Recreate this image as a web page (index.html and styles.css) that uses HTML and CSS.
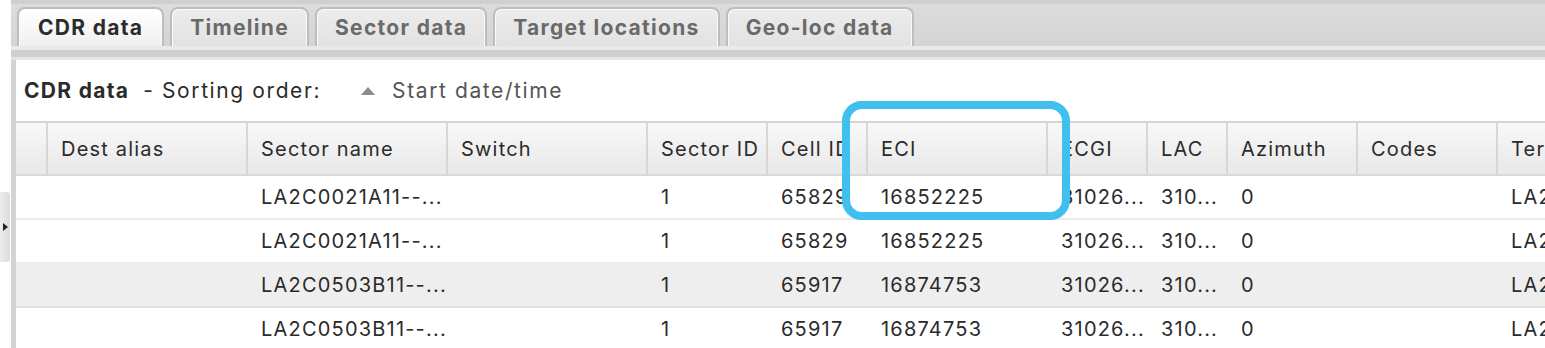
FILE: index.html
```html
<!DOCTYPE html>
<html lang="en">
	<head>
		<meta charset="utf-8">
		<title>CDR data</title>
		<link rel="stylesheet" href="styles.css">
	</head>
	<body>
		<div id="page">
			<div class="gutter">
				<div class="expander"><span class="expander-arrow"></span></div>
			</div>
			<div class="panel">
				<div class="tabbar">
					<div class="tab active">CDR data</div>
					<div class="tab">Timeline</div>
					<div class="tab">Sector data</div>
					<div class="tab">Target locations</div>
					<div class="tab">Geo-loc data</div>
				</div>
				<div class="tabstrip"></div>
				<div class="content">
					<div class="titlebar">
						<b>CDR data</b>
						<span class="sorting">- Sorting order:</span>
						<span class="sortkey"><span class="sort-arrow"></span>Start date/time</span>
					</div>
					<table class="grid">
						<colgroup>
							<col style="width:32px">
							<col style="width:200px">
							<col style="width:200px">
							<col style="width:200px">
							<col style="width:120px">
							<col style="width:100px">
							<col style="width:180px">
							<col style="width:100px">
							<col style="width:80px">
							<col style="width:130px">
							<col style="width:140px">
							<col style="width:200px">
						</colgroup>
						<thead>
							<tr>
								<th></th>
								<th>Dest alias</th>
								<th>Sector name</th>
								<th>Switch</th>
								<th>Sector ID</th>
								<th>Cell ID</th>
								<th>ECI</th>
								<th>ECGI</th>
								<th>LAC</th>
								<th>Azimuth</th>
								<th>Codes</th>
								<th>Terminal sector</th>
							</tr>
						</thead>
						<tbody>
							<tr>
								<td></td><td></td><td>LA2C0021A11--...</td><td></td><td>1</td><td>65829</td>
								<td>16852225</td><td>31026...</td><td>310...</td><td>0</td><td></td><td>LA2C0021A11</td>
							</tr>
							<tr>
								<td></td><td></td><td>LA2C0021A11--...</td><td></td><td>1</td><td>65829</td>
								<td>16852225</td><td>31026...</td><td>310...</td><td>0</td><td></td><td>LA2C0021A11</td>
							</tr>
							<tr class="alt">
								<td></td><td></td><td>LA2C0503B11--...</td><td></td><td>1</td><td>65917</td>
								<td>16874753</td><td>31026...</td><td>310...</td><td>0</td><td></td><td>LA2C0503B11</td>
							</tr>
							<tr>
								<td></td><td></td><td>LA2C0503B11--...</td><td></td><td>1</td><td>65917</td>
								<td>16874753</td><td>31026...</td><td>310...</td><td>0</td><td></td><td>LA2C0503B11</td>
							</tr>
						</tbody>
					</table>
				</div>
			</div>
			<!-- highlight drawn over the ECI column -->
			<div class="callout"></div>
		</div>
	</body>
</html>
```

FILE: styles.css
```css
body { margin: 0; background: white; color: #2b2b2b; font-family: Inter, "Open Sans", sans-serif; }
#page {
	position: relative;
	display: flex;
	height: 348px;
	overflow: hidden;
}
.gutter {
	position: relative;
	width: 11px;
	flex: none;
}
.expander {
	position: absolute;
	left: 0;
	top: 192px;
	width: 10px;
	height: 70px;
	background: linear-gradient(90deg, #ececec, #dcdcdc);
	border-radius: 0 3px 3px 0;
	display: flex;
	align-items: center;
	justify-content: center;
}
.expander-arrow {
	width: 0;
	height: 0;
	border-top: 4px solid transparent;
	border-bottom: 4px solid transparent;
	border-left: 5px solid #222;
}
.panel {
	flex: 1;
	min-width: 0;
	display: flex;
	flex-direction: column;
}

/* tabs */
.tabbar {
	height: 42px;
	border-top: 4px solid #cfcfcf;
	background: linear-gradient(#dcdcdc, #d4d4d4);
	display: flex;
	align-items: flex-end;
	gap: 6px;
	padding-left: 6px;
}
.tab {
	height: 37px;
	padding: 0 18px;
	display: flex;
	align-items: center;
	border: 2px solid #bdbdbd;
	border-bottom: none;
	border-radius: 8px 8px 0 0;
	box-shadow: inset 1px 1px 0 #fafafa, inset -1px 0 0 #fafafa;
	background: linear-gradient(#ececec, #e2e2e2);
	color: #6a6a6a;
	font-weight: 700;
	font-size: 21px;
	letter-spacing: 1.3px;
}
.tab.active {
	background: linear-gradient(#ffffff, #efefef);
	color: #2b2b2b;
	padding: 0 19px;
}
.tabstrip {
	height: 4px;
	background: #e9e9e9;
	border-bottom: 7px solid #cfcfcf;
	box-shadow: 0 3px 0 #e6e6e6;
	margin-bottom: 3px;
}

/* content */
.content {
	flex: 1;
	border-left: 5px solid #d3d3d3;
	overflow: hidden;
}
.titlebar {
	height: 61px;
	display: flex;
	align-items: center;
	padding-left: 8px;
	font-size: 21px;
	letter-spacing: 1.6px;
	color: #2b2b2b;
	white-space: nowrap;
}
.titlebar b {
	font-weight: 700;
	letter-spacing: 1.3px;
}
.sorting {
	margin-left: 14px;
}
.sortkey {
	display: flex;
	align-items: center;
	margin-left: 40px;
	color: #555;
}
.sort-arrow {
	width: 0;
	height: 0;
	border-left: 7px solid transparent;
	border-right: 7px solid transparent;
	border-bottom: 8px solid #8a8a8a;
	margin-right: 17px;
}

/* grid */
.grid {
	table-layout: fixed;
	border-collapse: separate;
	border-spacing: 0;
	width: 1682px;
	font-size: 20px;
	letter-spacing: 1.2px;
	border-top: 2px solid #d4d4d4;
}
.grid th {
	height: 51px;
	padding: 0 0 0 13px;
	text-align: left;
	font-weight: 400;
	color: #2b2b2b;
	background: linear-gradient(#f8f8f8, #e8e8e8);
	border-right: 2px solid #d6d6d6;
	border-bottom: 2px solid #d8d8d8;
	white-space: nowrap;
	overflow: hidden;
}
.grid td {
	height: 42px;
	padding: 0 0 0 13px;
	border-bottom: 2px solid #ececec;
	white-space: nowrap;
	overflow: hidden;
}
.grid tr.alt td {
	background: #eeeeee;
	border-bottom-color: #e0e0e0;
}

.callout {
	position: absolute;
	left: 842px;
	top: 101px;
	width: 212px;
	height: 103px;
	border: 8px solid #3fc0ee;
	border-radius: 20px;
}
```
